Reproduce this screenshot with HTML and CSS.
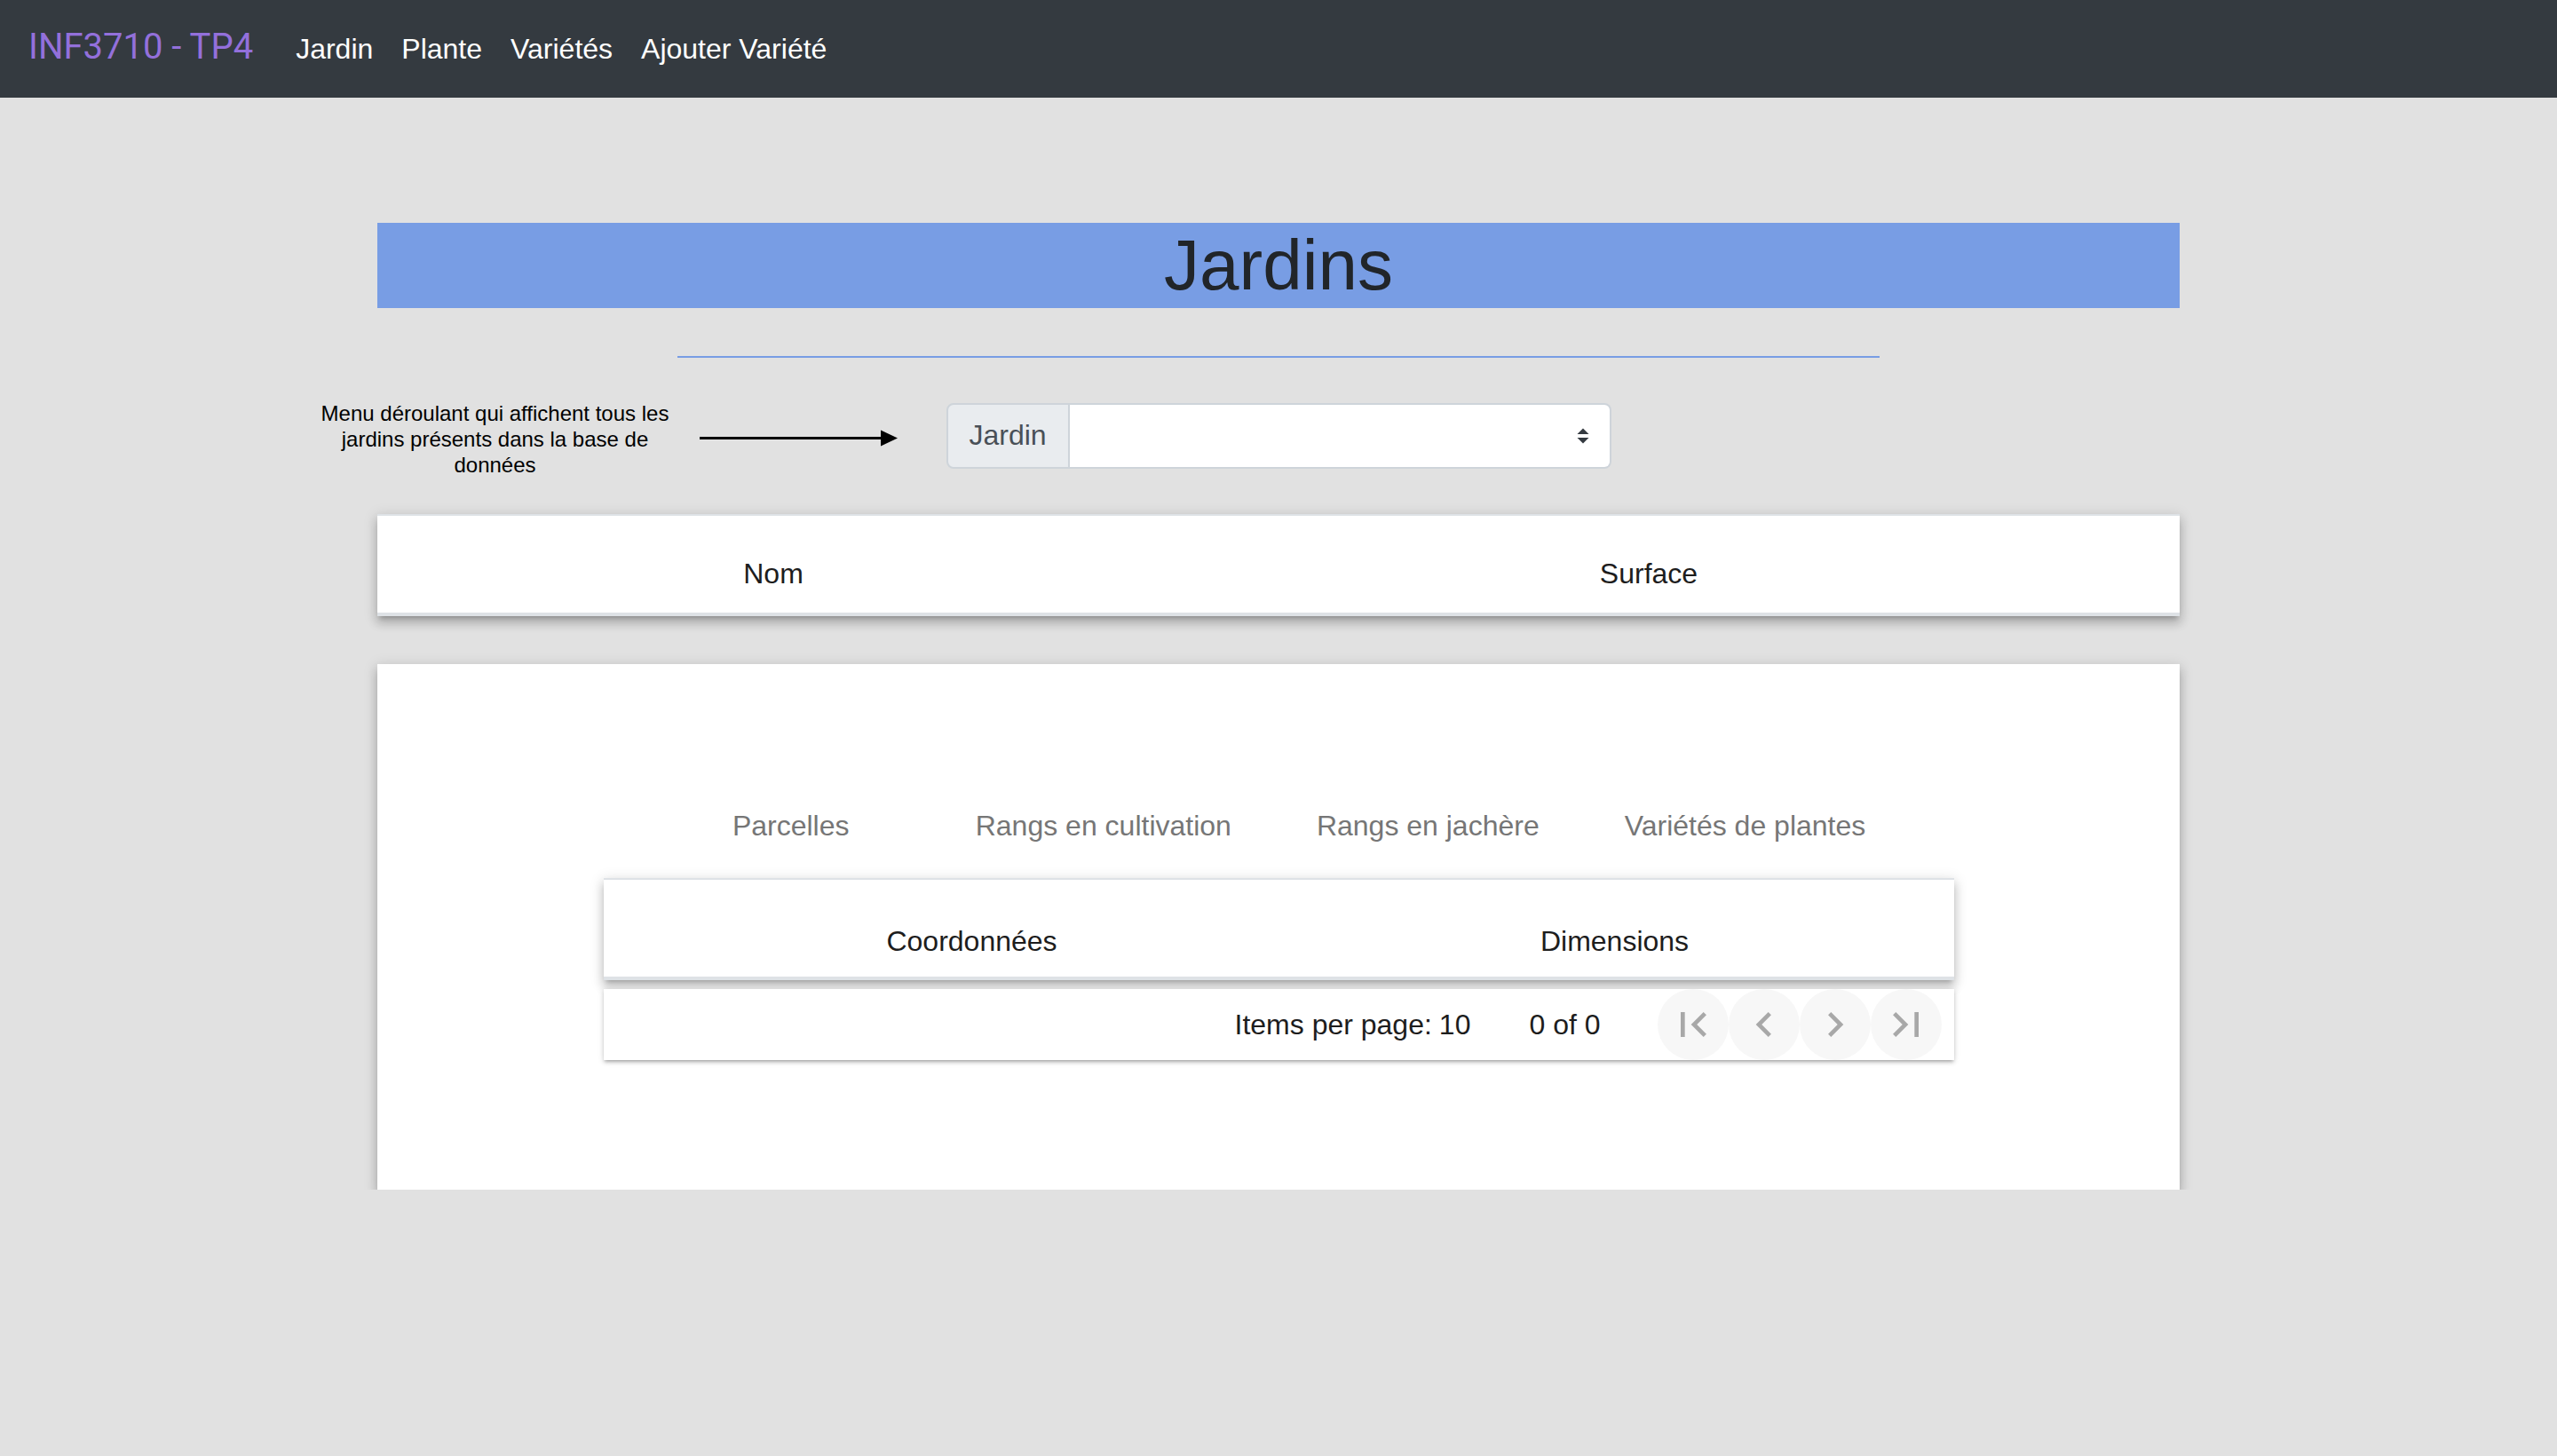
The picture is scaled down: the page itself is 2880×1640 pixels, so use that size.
FILE: index.html
```html
<!DOCTYPE html>
<html lang="fr">
<head>
<meta charset="utf-8">
<title>INF3710 - TP4</title>
<link rel="stylesheet" href="styles.css">
</head>
<body>
<nav class="navbar">
  <a class="brand" href="#">INF3710 - TP4</a>
  <ul class="nav-links">
    <li><a class="nav-link" href="#">Jardin</a></li>
    <li><a class="nav-link" href="#">Plante</a></li>
    <li><a class="nav-link" href="#">Variétés</a></li>
    <li><a class="nav-link" href="#">Ajouter Variété</a></li>
  </ul>
</nav>
<main class="page">
  <h1 class="title">Jardins</h1>
  <hr class="divider">
  <div class="picker-row">
    <div class="annotation">
      <p class="annotation-text">Menu déroulant qui affichent tous les jardins présents dans la base de données</p>
      <svg class="annotation-arrow" width="223" height="24" viewBox="0 0 223 24">
        <rect x="0" y="13" width="206" height="3" fill="#000"/>
        <path d="M204 5.5 L223 14.5 L204 23.5 Z" fill="#000"/>
      </svg>
    </div>
    <div class="input-group">
      <span class="input-addon">Jardin</span>
      <div class="select">
        <svg class="select-arrows" width="16" height="18" viewBox="0 0 16 18">
          <path d="M1.5 7 L8 0.5 L14.5 7 Z" fill="#343a40"/>
          <path d="M1.5 11 L8 17.5 L14.5 11 Z" fill="#343a40"/>
        </svg>
      </div>
    </div>
    <div class="picker-spacer"></div>
  </div>

  <div class="table-card">
    <div class="header-row jardins-row">
      <div class="header-cell">Nom</div>
      <div class="header-cell">Surface</div>
    </div>
  </div>

  <section class="details-card">
    <div class="tabs">
      <div class="tab">Parcelles</div>
      <div class="tab">Rangs en cultivation</div>
      <div class="tab">Rangs en jachère</div>
      <div class="tab">Variétés de plantes</div>
    </div>
    <div class="inner">
      <div class="table-card">
        <div class="header-row inner-row">
          <div class="header-cell">Coordonnées</div>
          <div class="header-cell">Dimensions</div>
        </div>
      </div>
      <div class="paginator">
        <span class="page-size-label">Items per page:</span>
        <span class="page-size-value">10</span>
        <span class="range-label">0 of 0</span>
        <div class="page-buttons">
          <button class="page-btn" aria-label="First page">
            <svg viewBox="0 0 24 24" width="56" height="56"><path d="M18.41 16.59L13.82 12l4.59-4.59L17 6l-6 6 6 6zM6 6h2v12H6z"/></svg>
          </button>
          <button class="page-btn" aria-label="Previous page">
            <svg viewBox="0 0 24 24" width="56" height="56"><path d="M15.41 7.41L14 6l-6 6 6 6 1.41-1.41L10.83 12z"/></svg>
          </button>
          <button class="page-btn" aria-label="Next page">
            <svg viewBox="0 0 24 24" width="56" height="56"><path d="M10 6L8.59 7.41 13.17 12l-4.58 4.59L10 18l6-6z"/></svg>
          </button>
          <button class="page-btn" aria-label="Last page">
            <svg viewBox="0 0 24 24" width="56" height="56"><path d="M5.59 7.41L10.18 12l-4.59 4.59L7 18l6-6-6-6zM16 6h2v12h-2z"/></svg>
          </button>
        </div>
      </div>
    </div>
  </section>
</main>
</body>
</html>
```
FILE: styles.css
```css
* { box-sizing: border-box; }

body {
  margin: 0;
  background: #e1e1e1;
  font-family: "Liberation Sans", Arial, Helvetica, sans-serif;
  color: #212529;
}

/* Navbar */
.navbar {
  display: flex;
  align-items: baseline;
  height: 110px;
  padding: 23px 32px 0;
  background: #343a40;
}
.brand {
  font-family: Roboto, "Liberation Sans", Arial, sans-serif;
  font-size: 40px;
  line-height: 60px;
  color: #9370db;
  text-decoration: none;
  margin-right: 32px;
}
.nav-links {
  display: flex;
  list-style: none;
  margin: 0;
  padding: 0;
}
.nav-link {
  display: block;
  padding: 0 16px;
  font-size: 32px;
  line-height: 48px;
  color: #fff;
  text-decoration: none;
}

/* Page */
.page {
  width: 2030px;
  margin: 0 auto;
}
.title {
  margin: 141px 0 0;
  height: 96px;
  font-size: 80px;
  line-height: 96px;
  font-weight: 400;
  text-align: center;
  background: #789de4;
  color: #212529;
}
.divider {
  display: block;
  width: 1354px;
  height: 2px;
  border: 0;
  background: #789de4;
  margin: 54px auto 0;
}

/* Picker row */
.picker-row {
  display: grid;
  grid-template-columns: minmax(0, 1fr) 749px minmax(0, 1fr);
  align-items: center;
  margin-top: 40px;
}
.annotation {
  min-width: 0;
  display: flex;
  align-items: center;
  justify-content: flex-end;
  gap: 30px;
  padding-right: 55px;
}
.annotation-text {
  flex: none;
  width: 400px;
  margin: 0;
  padding-top: 8px;
  font-size: 24px;
  line-height: 29px;
  text-align: center;
  color: #000;
}
.annotation-arrow { display: block; flex: none; }

.input-group {
  display: flex;
  height: 74px;
}
.input-addon {
  display: flex;
  align-items: center;
  padding: 0 24px;
  background: #e9ecef;
  border: 2px solid #ced4da;
  border-radius: 8px 0 0 8px;
  font-size: 32px;
  color: #495057;
}
.select {
  flex: 1;
  display: flex;
  align-items: center;
  justify-content: flex-end;
  padding-right: 22px;
  background: #fff;
  border: 2px solid #ced4da;
  border-left: 0;
  border-radius: 0 8px 8px 0;
}
.select-arrows { display: block; }

/* Tables */
.table-card {
  background: #fff;
  box-shadow: 0 5px 5px -3px rgba(0,0,0,.2), 0 8px 10px 1px rgba(0,0,0,.14), 0 3px 14px 2px rgba(0,0,0,.12);
}
.page > .table-card { margin-top: 41px; }

.header-row {
  display: grid;
  align-items: end;
  height: 115px;
  border-top: 2px solid #dee2e6;
  border-bottom: 4px solid #dee2e6;
  font-size: 32px;
  line-height: 48px;
  color: #1d1d1d;
}
.header-cell { text-align: center; }
.jardins-row {
  grid-template-columns: 796px 1176px;
  padding: 0 0 20px 48px;
}
.inner-row {
  grid-template-columns: 734px 714px;
  padding: 0 0 16px 48px;
}

/* Details card with tabs */
.details-card {
  margin-top: 54px;
  padding: 134px 0 146px;
  background: #fff;
  box-shadow: 0 5px 5px -3px rgba(0,0,0,.2), 0 8px 10px 1px rgba(0,0,0,.14), 0 3px 14px 2px rgba(0,0,0,.12);
}
.tabs {
  display: flex;
  justify-content: center;
  height: 96px;
}
.tab {
  min-width: 320px;
  padding: 0 48px;
  display: flex;
  align-items: center;
  justify-content: center;
  font-size: 32px;
  color: #767676;
  white-space: nowrap;
}
.inner {
  width: 1521px;
  margin: 11px auto 0;
}

/* Paginator */
.paginator {
  margin-top: 10px;
  height: 80px;
  display: flex;
  align-items: center;
  justify-content: flex-end;
  padding-right: 14px;
  background: #fff;
  font-size: 32px;
  color: #1d1d1d;
  box-shadow: 0 3px 3px -2px rgba(0,0,0,.2), 0 3px 4px 0 rgba(0,0,0,.14), 0 1px 8px 0 rgba(0,0,0,.12);
}
.page-size-value { margin-left: 8px; }
.range-label { margin: 0 64px 0 66px; }
.page-buttons { display: flex; }
.page-btn {
  width: 80px;
  height: 80px;
  padding: 0;
  border: 0;
  border-radius: 50%;
  background: #f7f7f7;
  display: flex;
  align-items: center;
  justify-content: center;
  fill: #a8a8a8;
}
.page-btn svg { display: block; }
```
